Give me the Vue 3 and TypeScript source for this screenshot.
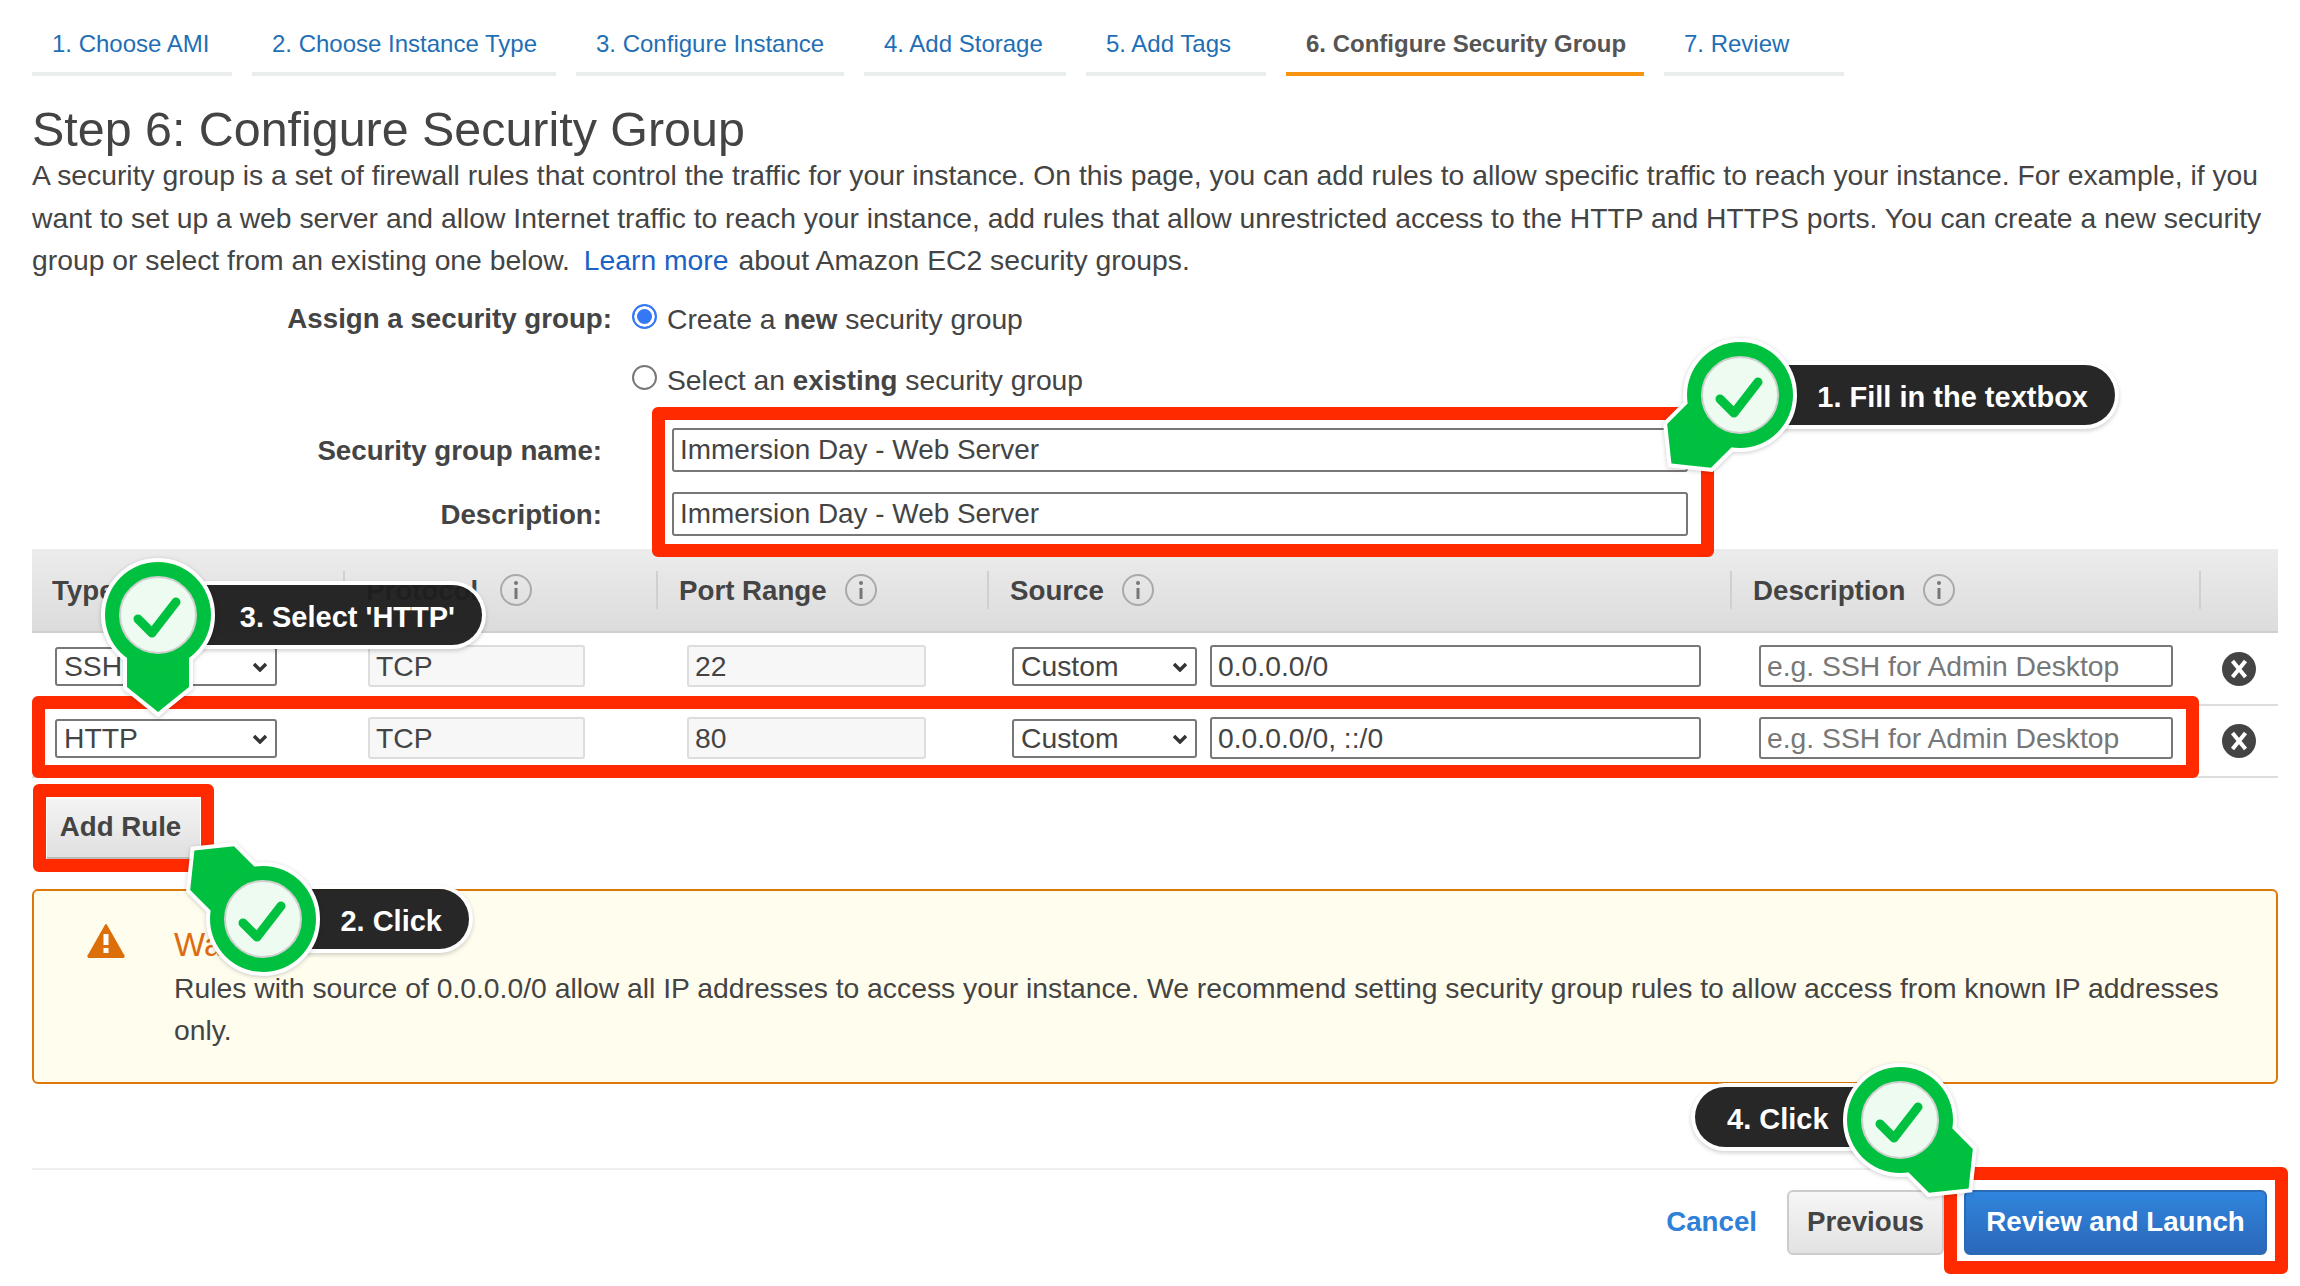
<template>
  <div class="page">
    <!-- wizard steps -->
    <nav class="tabs">
      <a
        v-for="(t, i) in tabs"
        :key="t.label"
        class="tab"
        :class="{ 'tab--on': i === 5 }"
        :style="{ width: `${t.width}px` }"
      >{{ t.label }}</a>
    </nav>

    <h1 class="title">Step 6: Configure Security Group</h1>
    <p class="intro">
      <span class="intro__part">A security group is a set of firewall rules that control the traffic for your instance. On this page, you can add rules to allow specific traffic to reach your instance. For example, if you want to set up a web server and allow Internet traffic to reach your instance, add rules that allow unrestricted access to the HTTP and HTTPS ports. You can create a new security</span>
      <span class="intro__part">group or select from an existing one below. <a class="link">Learn more</a> about Amazon EC2 security groups.</span>
    </p>

    <div class="assign">
      <div class="assign__label">Assign a security group:</div>
      <div class="assign__opts">
        <label class="radio">
          <input type="radio" name="sg" checked />
          <span>Create a <b>new</b> security group</span>
        </label>
        <label class="radio">
          <input type="radio" name="sg" />
          <span>Select an <b>existing</b> security group</span>
        </label>
      </div>
    </div>

    <div class="names">
      <label class="names__row">
        <span class="names__label">Security group name:</span>
        <input class="field field--name" value="Immersion Day - Web Server" />
      </label>
      <label class="names__row">
        <span class="names__label">Description:</span>
        <input class="field field--name" value="Immersion Day - Web Server" />
      </label>
    </div>

    <!-- rules table -->
    <div class="rules">
      <div class="rules__head">
        <div v-for="h in headers" :key="h" class="th">
          <span>{{ h }}</span>
          <svg class="info" viewBox="0 0 34 34">
            <circle cx="17" cy="17" r="15" fill="none" stroke="#a9a9a9" stroke-width="2" />
            <circle cx="17" cy="10" r="2" fill="#777" />
            <path d="M17 15v11" stroke="#777" stroke-width="3" />
          </svg>
        </div>
        <div class="th"></div>
      </div>
      <div v-for="r in rows" :key="r.type" class="rules__row">
        <div class="td td--type">
          <div class="pick pick--type">
            <select class="pick__el"><option>{{ r.type }}</option></select>
            <svg class="pick__arrow" viewBox="0 0 16 10"><path d="M2 2l6 6 6-6" fill="none" stroke="#333" stroke-width="3.4" /></svg>
          </div>
        </div>
        <div class="td td--proto"><input class="field field--off field--proto" value="TCP" readonly /></div>
        <div class="td td--port"><input class="field field--off field--port" :value="r.port" readonly /></div>
        <div class="td td--source">
          <div class="pick pick--source">
            <select class="pick__el"><option>Custom</option></select>
            <svg class="pick__arrow" viewBox="0 0 16 10"><path d="M2 2l6 6 6-6" fill="none" stroke="#333" stroke-width="3.4" /></svg>
          </div>
          <input class="field field--cidr" :value="r.cidr" />
        </div>
        <div class="td td--desc"><input class="field field--desc" placeholder="e.g. SSH for Admin Desktop" /></div>
        <div class="td td--del">
          <svg class="del" viewBox="0 0 34 34">
            <circle cx="17" cy="17" r="17" fill="#444" />
            <path d="M10.5 9l13 16M23.5 9l-13 16" stroke="#fff" stroke-width="4" />
          </svg>
        </div>
      </div>
    </div>

    <button class="btn btn--add">Add Rule</button>

    <div class="warn">
      <svg class="warn__icon" viewBox="0 0 38 35">
        <path d="M19 2L36 32a1 1 0 0 1-1 2H3a1 1 0 0 1-1-2z" fill="#dd6f0a" stroke="#dd6f0a" stroke-width="2" stroke-linejoin="round" />
        <rect x="16.5" y="11" width="5" height="11" fill="#fff" />
        <rect x="16.5" y="25" width="5" height="5" fill="#fff" />
      </svg>
      <div class="warn__body">
        <div class="warn__title">Warning</div>
        <p class="warn__text">Rules with source of 0.0.0.0/0 allow all IP addresses to access your instance. We recommend setting security group rules to allow access from known IP addresses only.</p>
      </div>
    </div>

    <footer class="foot">
      <a class="foot__cancel">Cancel</a>
      <button class="btn btn--prev">Previous</button>
      <button class="btn btn--go">Review and Launch</button>
    </footer>

    <!-- screenshot annotations -->
    <div v-for="f in frames" :key="f.id" class="frame" :style="boxStyle(f)"></div>

    <template v-for="c in callouts" :key="c.text">
      <div class="pill" :style="pillStyle(c)">{{ c.text }}</div>
      <svg class="pin" viewBox="-120 -120 240 240" :style="pinStyle(c)">
        <g :transform="`rotate(${c.rot})`">
          <path class="pin__edge" d="M-31 30V72L0 97 31 72V30z" />
          <circle class="pin__edge" r="53" />
          <path class="pin__green" d="M-31 30V72L0 97 31 72V30z" />
        </g>
        <circle class="pin__green" r="53" />
        <circle class="pin__face" r="38" />
        <path class="pin__check" d="M-20 4L-6 18 18-13" />
      </svg>
    </template>
  </div>
</template>

<script setup lang="ts">
interface Box {
  id: string
  x: number
  y: number
  w: number
  h: number
}

interface Callout {
  text: string
  cx: number
  cy: number
  rot: number
  left: number
  top: number
  width: number
  align: 'left' | 'right'
}

const tabs = [
  { label: '1. Choose AMI', width: 200 },
  { label: '2. Choose Instance Type', width: 304 },
  { label: '3. Configure Instance', width: 268 },
  { label: '4. Add Storage', width: 202 },
  { label: '5. Add Tags', width: 180 },
  { label: '6. Configure Security Group', width: 358 },
  { label: '7. Review', width: 180 },
]

const headers = ['Type', 'Protocol', 'Port Range', 'Source', 'Description']

const rows = [
  { type: 'SSH', port: '22', cidr: '0.0.0.0/0' },
  { type: 'HTTP', port: '80', cidr: '0.0.0.0/0, ::/0' },
]

const frames: Box[] = [
  { id: 'names', x: 652, y: 407, w: 1062, h: 150 },
  { id: 'row', x: 32, y: 696, w: 2167, h: 82 },
  { id: 'add', x: 33, y: 784, w: 181, h: 88 },
  { id: 'go', x: 1944, y: 1167, w: 344, h: 107 },
]

const callouts: Callout[] = [
  { text: '1. Fill in the textbox', cx: 1740, cy: 395, rot: 45, left: 1740, top: 365, width: 375, align: 'right' },
  { text: '3. Select \'HTTP\'', cx: 158, cy: 615, rot: 0, left: 158, top: 585, width: 324, align: 'right' },
  { text: '2. Click', cx: 263, cy: 919, rot: 135, left: 263, top: 889, width: 206, align: 'right' },
  { text: '4. Click', cx: 1900, cy: 1120, rot: -45, left: 1695, top: 1087, width: 205, align: 'left' },
]

const boxStyle = (b: Box) => ({
  left: `${b.x}px`,
  top: `${b.y}px`,
  width: `${b.w}px`,
  height: `${b.h}px`,
})

const pillStyle = (c: Callout) => ({
  left: `${c.left}px`,
  top: `${c.top}px`,
  width: `${c.width}px`,
  justifyContent: c.align === 'right' ? 'flex-end' : 'flex-start',
})

const pinStyle = (c: Callout) => ({
  left: `${c.cx - 120}px`,
  top: `${c.cy - 120}px`,
})
</script>

<style scoped>
.page {
  position: relative;
  height: 1286px;
  overflow: hidden;
  padding: 0 22px 0 32px;
  box-sizing: border-box;
  background: #fff;
  color: #444;
  font-family: "Liberation Sans", Arial, sans-serif;
  font-size: 28.3px;
  line-height: 42.5px;
}

.tabs {
  display: flex;
  gap: 20px;
}
.tab {
  box-sizing: border-box;
  padding: 29px 0 13px 20px;
  border-bottom: 4px solid #eaeded;
  color: #1f6fb5;
  font-size: 24px;
  line-height: 30px;
  white-space: nowrap;
}
.tab--on {
  border-bottom-color: #f7930e;
  color: #555;
  font-weight: 700;
}

.title {
  margin: 27px 0 -1px;
  font-size: 48.4px;
  font-weight: 400;
  line-height: 52px;
  color: #444;
}
.intro {
  margin: 0;
}
.intro__part {
  display: block;
}
.link {
  margin: 0 2px 0 6px;
  color: #1a62c5;
}

.assign {
  display: flex;
  margin-top: 16px;
}
.assign__label {
  width: 580px;
  font-size: 27.7px;
  font-weight: 700;
  text-align: right;
}
.assign__opts {
  display: flex;
  flex-direction: column;
  gap: 18px;
  margin-left: 20px;
}
.radio {
  display: flex;
  gap: 10px;
  align-items: flex-start;
}
.radio b {
  font-size: 27.7px;
}
.radio input {
  appearance: none;
  width: 25px;
  height: 25px;
  margin: 6px 0 0;
  border: 2px solid #777;
  border-radius: 50%;
  background: #fff;
}
.radio input:checked {
  border-color: #3478f6;
  box-shadow: inset 0 0 0 3px #fff;
  background: #3478f6;
}

.names {
  display: flex;
  flex-direction: column;
  gap: 20px;
  margin-top: 25px;
}
.names__row {
  display: flex;
  align-items: center;
}
.names__label {
  width: 570px;
  margin-right: 70px;
  padding-top: 2px;
  font-size: 27.7px;
  font-weight: 700;
  text-align: right;
}

.field {
  box-sizing: border-box;
  height: 42px;
  padding: 0 6px;
  border: 2px solid #777;
  border-radius: 3px;
  background: #fff;
  color: #444;
  font: inherit;
  outline: none;
}
.field::placeholder {
  color: #777;
  opacity: 1;
}
.field--name {
  width: 1016px;
  height: 44px;
  font-size: 27.9px;
}
.field--off {
  border-color: #ddd;
  background: #f7f7f7;
}
.field--proto { width: 217px; }
.field--port { width: 239px; }
.field--cidr { width: 491px; margin-left: 13px; }
.field--desc { width: 414px; }

.rules {
  margin-top: 12px;
}
.rules__head,
.rules__row {
  display: grid;
  grid-template-columns: 311px 313px 331px 743px 469px 79px;
}
.rules__head {
  height: 82px;
  border-bottom: 2px solid #cfcfcf;
  background: linear-gradient(#ececec, #dcdcdc);
}
.rules__row {
  box-sizing: border-box;
  height: 72px;
  align-items: center;
  border-bottom: 2px solid #ddd;
  padding-bottom: 5px;
}
.rules__head + .rules__row {
  height: 73px;
  padding-bottom: 4px;
}
.th {
  display: flex;
  align-items: center;
  gap: 17px;
  box-sizing: border-box;
  height: 38px;
  margin-top: 22px;
  padding: 4px 0 0 21px;
  border-left: 2px solid #d0d0d0;
  font-size: 27.7px;
  font-weight: 700;
}
.th:first-child {
  padding-left: 20px;
  border-left: 0;
}
.th:nth-child(2) .info {
  margin-left: 4px;
}
.info {
  width: 34px;
  height: 34px;
  margin-top: -3px;
}
.td {
  display: flex;
  align-items: center;
}
.td--type { padding-left: 23px; }
.td--proto { padding-left: 25px; }
.td--port { padding-left: 31px; }
.td--source { padding-left: 25px; }
.td--desc { padding-left: 29px; }
.td--del { padding-left: 23px; }

.pick {
  position: relative;
}
.pick--type { width: 222px; }
.pick--source { width: 185px; }
.pick__el {
  display: block;
  box-sizing: border-box;
  width: 100%;
  height: 39px;
  padding: 0 7px;
  border: 2px solid #777;
  border-radius: 3px;
  appearance: none;
  background: #fff;
  color: #444;
  font: inherit;
  line-height: 33px;
}
.pick__arrow {
  position: absolute;
  right: 9px;
  top: 15px;
  width: 16px;
  height: 10px;
  pointer-events: none;
}
.del {
  width: 34px;
  height: 34px;
  margin-top: 5px;
}

.btn {
  box-sizing: border-box;
  border: 0;
  font: inherit;
  font-size: 27.7px;
  font-weight: 700;
  white-space: nowrap;
}
.btn--add {
  display: block;
  width: 153px;
  height: 60px;
  margin: 21px 0 0 15px;
  padding: 0 6px 0 0;
  border-bottom: 2px solid #bbb;
  background: linear-gradient(#f4f4f4, #e0e0e0);
  color: #444;
}

.warn {
  display: flex;
  box-sizing: border-box;
  height: 195px;
  margin-top: 30px;
  padding: 32px 40px 0 53px;
  border: 2px solid #dd7708;
  border-radius: 6px;
  background: #fffdee;
}
.warn__icon {
  flex: none;
  width: 38px;
  height: 35px;
  margin: 0 49px 0 0;
}
.warn__title {
  color: #dd6b10;
  font-size: 33px;
  line-height: 44px;
}
.warn__text {
  margin: 0;
}

.foot {
  display: flex;
  align-items: center;
  justify-content: flex-end;
  margin-top: 84px;
  padding: 20px 11px 0 0;
  border-top: 2px solid #eee;
}
.foot__cancel {
  margin-right: 30px;
  color: #2f80d8;
  font-size: 27.7px;
  font-weight: 700;
}
.btn--prev {
  width: 157px;
  height: 65px;
  border: 2px solid #ccc;
  border-radius: 6px;
  background: linear-gradient(#f6f6f6, #e2e2e2);
  color: #444;
}
.btn--go {
  width: 303px;
  height: 65px;
  margin-left: 20px;
  border: 2px solid #2a6bb5;
  border-radius: 6px;
  background: linear-gradient(#3085dd, #2a68ba);
  color: #fff;
}

.frame {
  position: absolute;
  box-sizing: border-box;
  border: 13.5px solid #ff2a00;
  border-radius: 6px;
  pointer-events: none;
}

.pill {
  position: absolute;
  display: flex;
  align-items: center;
  box-sizing: border-box;
  height: 60px;
  padding: 4px 27px 0 32px;
  border-radius: 30px;
  background: rgba(30, 30, 30, 0.96);
  box-shadow: 0 0 0 4px #fff, 0 2px 4px 4px rgba(0, 0, 0, 0.18);
  color: #fff;
  font-size: 29px;
  font-weight: 700;
  line-height: 52px;
  white-space: nowrap;
}

.pin {
  position: absolute;
  width: 240px;
  height: 240px;
  pointer-events: none;
  filter: drop-shadow(0 1px 2px rgba(0, 0, 0, 0.2));
}
.pin__edge {
  fill: #fff;
  stroke: #fff;
  stroke-width: 8;
}
.pin__green {
  fill: #00c13f;
}
.pin__face {
  fill: rgba(255, 255, 255, 0.93);
  stroke: #cfcfcf;
  stroke-width: 2;
}
.pin__check {
  fill: none;
  stroke: #00c13f;
  stroke-width: 9;
  stroke-linecap: round;
  stroke-linejoin: round;
}
</style>

<style>
html,
body {
  margin: 0;
  background: #fff;
}
</style>
